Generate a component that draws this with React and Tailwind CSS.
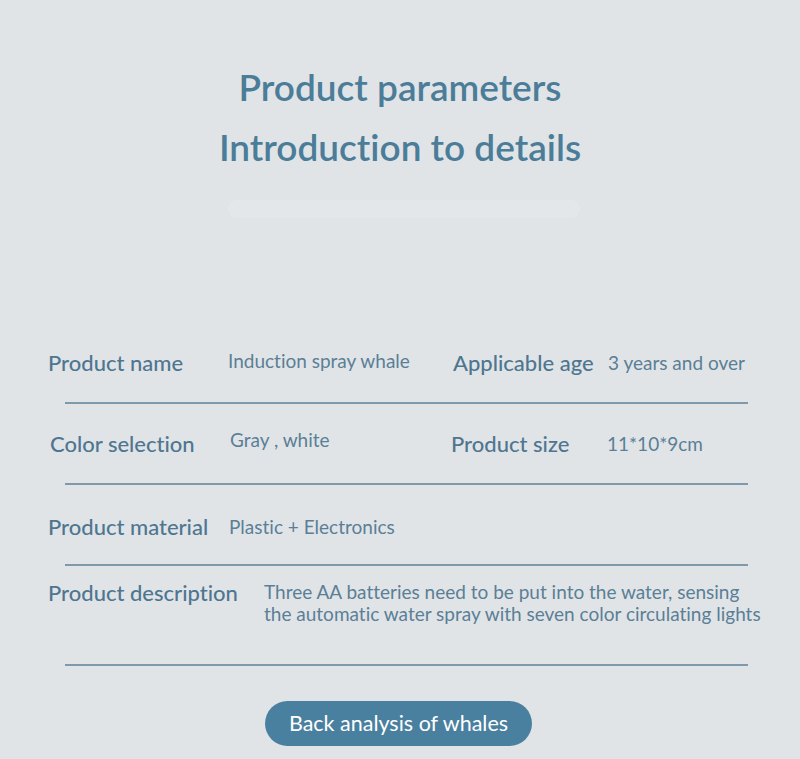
export default function App() {
  const font = { fontFamily: "Lato, 'Noto Sans', sans-serif" };
  const Line = () => <div className="ml-[65px] w-[683px] h-[2px] bg-[#7f99ab]" />;
  return (
    <div className="w-[800px] h-[759px] bg-[#e1e4e7] overflow-hidden [font-variant-ligatures:none]" style={font}>
      <div className="pt-[57px] text-center text-[37px] leading-[60px] text-[#4b7d99] font-semibold">
        <div>Product parameters</div>
        <div>Introduction to details</div>
      </div>
      <div className="mt-[23px] ml-[228px] w-[352px] h-[18px] rounded-full bg-[#e4e7ea]" />

      <div className="mt-[130px] flex items-center h-[28px]">
        <div className="pl-[48px] w-[228px] text-[22px] font-medium text-[#4e7690]">Product name</div>
        <div className="w-[225px] text-[19px] text-[#5a7f96] -mt-[2px]">Induction spray whale</div>
        <div className="w-[155px] text-[22px] font-medium text-[#4e7690]">Applicable age</div>
        <div className="text-[19px] text-[#5a7f96] mt-[2px]">3 years and over</div>
      </div>
      <div className="mt-[26px]"><Line /></div>

      <div className="mt-[25px] flex items-center h-[28px]">
        <div className="pl-[50px] w-[230px] text-[22px] font-medium text-[#4e7690]">Color selection</div>
        <div className="w-[221px] text-[19px] text-[#5a7f96] -mt-[5px]">Gray , white</div>
        <div className="w-[156px] text-[22px] font-medium text-[#4e7690]">Product size</div>
        <div className="text-[19px] text-[#5a7f96] mt-[2px]">11*10*9cm</div>
      </div>
      <div className="mt-[26px]"><Line /></div>

      <div className="mt-[27px] flex items-center h-[28px]">
        <div className="pl-[48px] w-[229px] text-[22px] font-medium text-[#4e7690]">Product material</div>
        <div className="text-[19px] text-[#5a7f96] mt-[2px]">Plastic + Electronics</div>
      </div>
      <div className="mt-[24px]"><Line /></div>

      <div className="mt-[12px] flex items-start">
        <div className="pl-[48px] w-[264px] text-[22px] font-medium leading-[28px] text-[#4e7690] mt-[1px]">Product description</div>
        <div className="text-[19px] leading-[22px] text-[#5a7f96] mt-[3px] whitespace-nowrap">
          <div>Three AA batteries need to be put into the water, sensing</div>
          <div>the automatic water spray with seven color circulating lights</div>
        </div>
      </div>
      <div className="mt-[39px]"><Line /></div>

      <div className="mt-[35px] flex justify-center">
        <div className="ml-[-3px] w-[267px] h-[45px] rounded-full bg-[#4a809f] text-white text-[21.5px] flex items-center justify-center">
          Back analysis of whales
        </div>
      </div>
    </div>
  );
}
